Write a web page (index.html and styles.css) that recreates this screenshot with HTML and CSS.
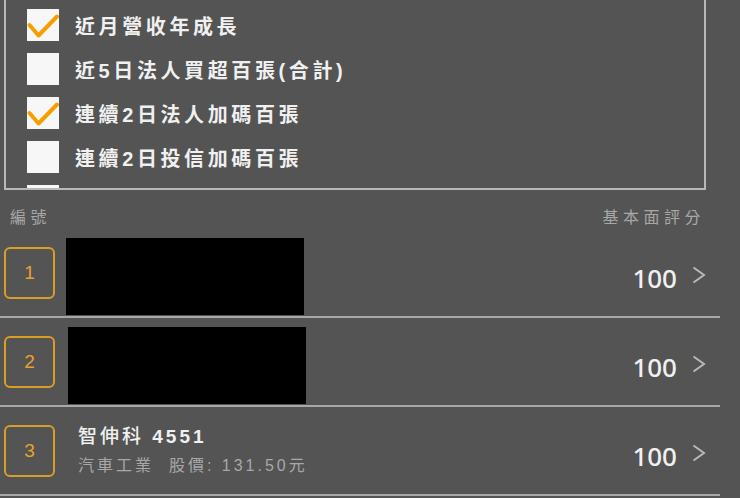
FILE: index.html
```html
<!DOCTYPE html>
<html lang="zh-Hant">
  <head>
    <meta charset="UTF-8" />
    <meta name="viewport" content="width=device-width, initial-scale=1.0" />
    <title>選股結果</title>
    <link rel="stylesheet" href="styles.css">
  </head>
  <body>
    <!-- Filter conditions (scrolled list) -->
    <div class="filter-box">
      <div class="filter-item">
        <span class="check-box checked">
          <svg viewBox="0 0 32 32" width="32" height="32"><polyline points="2.5,16 11.5,26.5 30,7.5" /></svg>
        </span>
        <span class="filter-label">近月營收年成長</span>
      </div>
      <div class="filter-item">
        <span class="check-box"></span>
        <span class="filter-label">近5日法人買超百張(合計)</span>
      </div>
      <div class="filter-item">
        <span class="check-box checked">
          <svg viewBox="0 0 32 32" width="32" height="32"><polyline points="2.5,16 11.5,26.5 30,7.5" /></svg>
        </span>
        <span class="filter-label">連續2日法人加碼百張</span>
      </div>
      <div class="filter-item">
        <span class="check-box"></span>
        <span class="filter-label">連續2日投信加碼百張</span>
      </div>
      <div class="filter-item">
        <span class="check-box"></span>
      </div>
    </div>

    <!-- List header -->
    <div class="list-head">
      <span>編號</span>
      <span>基本面評分</span>
    </div>

    <!-- Stock list -->
    <div class="stock-list">
      <div class="stock-row">
        <div class="rank">1</div>
        <div class="redacted"></div>
        <div class="score">100</div>
        <svg class="chevron" viewBox="0 0 14 18" width="14" height="18"><polyline points="1.5,1.5 12,9 1.5,16.5" /></svg>
      </div>
      <div class="stock-row">
        <div class="rank">2</div>
        <div class="redacted second"></div>
        <div class="score">100</div>
        <svg class="chevron" viewBox="0 0 14 18" width="14" height="18"><polyline points="1.5,1.5 12,9 1.5,16.5" /></svg>
      </div>
      <div class="stock-row">
        <div class="rank">3</div>
        <div class="stock-info">
          <div class="stock-name">智伸科 <b>4551</b></div>
          <div class="stock-meta">汽車工業&nbsp;&nbsp;股價: 131.50元</div>
        </div>
        <div class="score">100</div>
        <svg class="chevron" viewBox="0 0 14 18" width="14" height="18"><polyline points="1.5,1.5 12,9 1.5,16.5" /></svg>
      </div>
    </div>
  </body>
</html>
```

FILE: styles.css
```css
* {
  margin: 0;
  padding: 0;
  box-sizing: border-box;
}

body {
  background-color: #545454;
  font-family: "Liberation Sans", "Noto Sans CJK TC", sans-serif;
  width: 740px;
  height: 498px;
  overflow: hidden;
}

.filter-box {
  margin-left: 4px;
  width: 702px;
  height: 190px;
  border: 2px solid #b8b8b8;
  border-top: none;
  padding: 9px 0 0 21px;
  overflow: hidden;
}

.filter-item {
  display: flex;
  align-items: center;
  gap: 16px;
  height: 32px;
  margin-bottom: 12px;
}

.check-box {
  width: 32px;
  height: 32px;
  flex-shrink: 0;
  background-color: #f7f7f7;
}

.check-box svg {
  display: block;
  overflow: visible;
}

.check-box polyline {
  fill: none;
  stroke: #f5a000;
  stroke-width: 4;
  stroke-linecap: round;
  stroke-linejoin: round;
}

.filter-label {
  color: #f0f0f0;
  font-size: 20px;
  font-weight: bold;
  letter-spacing: 3.6px;
}

.list-head {
  display: flex;
  justify-content: space-between;
  align-items: center;
  height: 39px;
  padding: 12px 35px 0 10px;
  color: #a8a8a8;
  font-size: 16px;
  letter-spacing: 4.5px;
}

.stock-list {
  width: 720px;
}

.stock-row {
  display: flex;
  align-items: center;
  height: 89px;
  padding: 0 14px 0 4px;
  border-bottom: 2px solid #a8a8a8;
}

.rank {
  width: 51px;
  height: 52px;
  flex-shrink: 0;
  border: 2px solid #d99d28;
  border-radius: 6px;
  display: flex;
  justify-content: center;
  align-items: center;
  color: #e8a22c;
  font-size: 19px;
}

.redacted {
  width: 238px;
  height: 77px;
  margin-left: 11px;
  align-self: flex-end;
  margin-bottom: 1px;
  background-color: #000;
}

.redacted.second {
  margin-left: 13px;
}

.stock-info {
  margin-left: 23px;
  padding-top: 2px;
}

.stock-name {
  color: #f0f0f0;
  font-size: 19px;
  font-weight: 500;
  letter-spacing: 3px;
  line-height: 28px;
}

.stock-meta {
  color: #a8a8a8;
  font-size: 16px;
  letter-spacing: 3px;
  line-height: 30px;
}

.score {
  margin-left: auto;
  margin-top: 10px;
  color: #f0f0f0;
  font-family: "Noto Sans", "Liberation Sans", sans-serif;
  font-size: 26px;
  font-weight: 500;
}

.chevron {
  margin-left: 15px;
  margin-top: 4px;
}

.chevron polyline {
  fill: none;
  stroke: #b8b8b8;
  stroke-width: 2;
}
```
